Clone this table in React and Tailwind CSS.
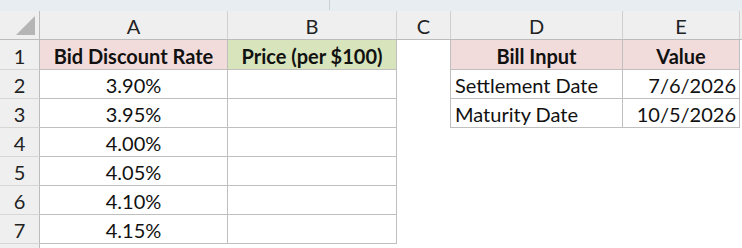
import React from "react";

const cols = [
  { key: "rh", w: "w-[40px]" },
  { key: "A", w: "w-[188px]" },
  { key: "B", w: "w-[169px]" },
  { key: "C", w: "w-[54px]" },
  { key: "D", w: "w-[172px]" },
  { key: "E", w: "w-[117px]" },
];

const rates = ["3.90%", "3.95%", "4.00%", "4.05%", "4.10%", "4.15%"];

function RowHead({ n, h }) {
  return (
    <div className={`w-[40px] ${h} shrink-0 bg-[#efefef] border-r border-b border-r-[#bcbcbc] border-b-[#d6d6d6] flex items-center justify-center pt-[2px] text-[#222]`}>
      {n}
    </div>
  );
}

export default function App() {
  const font = { fontFamily: "Lato, 'Liberation Sans', sans-serif" };
  return (
    <div className="w-[742px] h-[248px] overflow-hidden bg-white text-[20px] leading-none text-[#111]" style={font}>
      {/* top strip */}
      <div className="h-[11px] bg-[#e7edf0] flex">
        <div className="w-[330px] h-[10px] border-r border-[#c9d0d4]" />
      </div>
      {/* column headers */}
      <div className="flex h-[29px] bg-[#efefef] border-b border-[#bcbcbc]">
        <div className="w-[40px] shrink-0 border-r border-[#bcbcbc] relative">
          <svg className="absolute left-[16px] top-[5px]" width="19" height="19" viewBox="0 0 19 19">
            <polygon points="19,0 19,19 0,19" fill="#b5b5b5" />
          </svg>
        </div>
        {["A", "B", "C", "D", "E"].map((c, i) => (
          <div
            key={c}
            className={`${cols[i + 1].w} shrink-0 border-r border-[#d0d0d0] flex items-center justify-center pt-[2px] text-[#222]`}
          >
            {c}
          </div>
        ))}
        <div className="flex-1" />
      </div>
      {/* body */}
      <div className="flex">
        {/* row headers */}
        <div className="flex flex-col">
          <RowHead n={1} h="h-[30px]" />
          {[2, 3, 4, 5, 6, 7].map((n) => (
            <RowHead key={n} n={n} h="h-[29px]" />
          ))}
          <div className="w-[40px] h-[10px] bg-[#efefef] border-r border-[#bcbcbc]" />
        </div>
        {/* A */}
        <div className="flex flex-col w-[188px]">
          <div className="h-[30px] bg-[#f2dcdb] border-r border-b border-[#bfbfbf] flex items-center justify-center pt-[2px] font-bold">
            Bid Discount Rate
          </div>
          {rates.map((r) => (
            <div key={r} className="h-[29px] border-r border-b border-[#bfbfbf] flex items-center justify-center pt-[2px]">
              {r}
            </div>
          ))}
        </div>
        {/* B */}
        <div className="flex flex-col w-[169px]">
          <div className="h-[30px] bg-[#d8e4bc] border-r border-b border-[#bfbfbf] flex items-center justify-center pt-[2px] font-bold">
            Price (per $100)
          </div>
          {rates.map((r) => (
            <div key={r} className="h-[29px] border-r border-b border-[#bfbfbf]" />
          ))}
        </div>
        {/* C */}
        <div className="w-[54px] border-r border-[#bfbfbf] h-[88px]" />
        {/* D + E */}
        <div className="flex flex-col">
          <div className="flex h-[30px] bg-[#f2dcdb] border-b border-[#bfbfbf] font-bold">
            <div className="w-[172px] border-r border-[#bfbfbf] flex items-center justify-center pt-[2px]">Bill Input</div>
            <div className="w-[117px] border-r border-[#bfbfbf] flex items-center justify-center pt-[2px]">Value</div>
          </div>
          {[
            ["Settlement Date", "7/6/2026"],
            ["Maturity Date", "10/5/2026"],
          ].map(([a, b]) => (
            <div key={a} className="flex h-[29px] border-b border-[#bfbfbf]">
              <div className="w-[172px] border-r border-[#bfbfbf] flex items-center pl-[4px] pt-[2px]">{a}</div>
              <div className="w-[117px] border-r border-[#bfbfbf] flex items-center justify-end pr-[3px] pt-[2px]">{b}</div>
            </div>
          ))}
        </div>
      </div>
    </div>
  );
}
